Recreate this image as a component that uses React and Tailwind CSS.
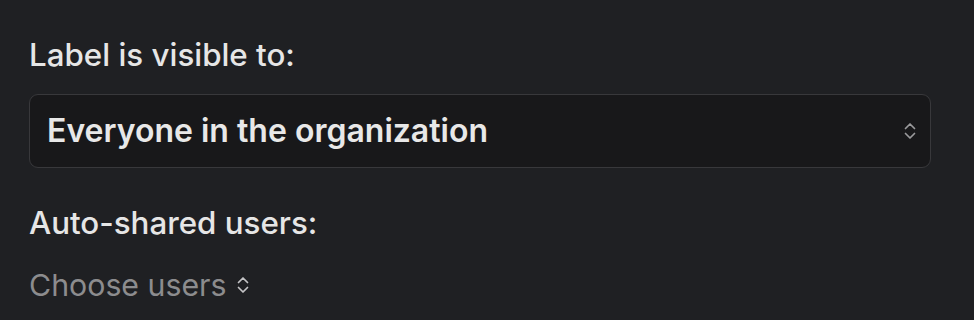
const Chevrons = ({ className }) => (
  <svg
    viewBox="0 0 14 20"
    className={className}
    fill="none"
    stroke="currentColor"
    strokeWidth="1.7"
    strokeLinecap="round"
    strokeLinejoin="round"
  >
    <path d="M2.5 7.5 7 3l4.5 4.5" />
    <path d="M2.5 12.5 7 17l4.5-4.5" />
  </svg>
);

const App = () => {
  return (
    <div
      className="w-[974px] h-[320px] bg-[#1f2023] text-[#e6e6e6] px-[29px] pt-[36px]"
      style={{ fontFamily: "Inter, 'Noto Sans', sans-serif" }}
    >
      <div className="text-[31.3px] leading-[38px] font-medium">Label is visible to:</div>
      <button className="mt-[20px] w-[902px] h-[74px] flex items-center justify-between rounded-[9px] border border-[#38383b] bg-[#18181a] pl-[17px] pr-[13px]">
        <span className="text-[32px] leading-[38px] font-semibold text-[#e8e8e8]">Everyone in the organization</span>
        <Chevrons className="w-[14px] h-[20px] text-[#9a9a9c]" />
      </button>
      <div className="mt-[36px] text-[31.3px] leading-[38px] font-medium">Auto-shared users:</div>
      <button className="mt-[24px] flex items-center gap-[9px] text-[30.3px] leading-[38px] text-[#8c8c8e]">
        Choose users
        <Chevrons className="w-[14px] h-[20px] text-[#c4c4c6]" />
      </button>
    </div>
  );
};

export default App;
